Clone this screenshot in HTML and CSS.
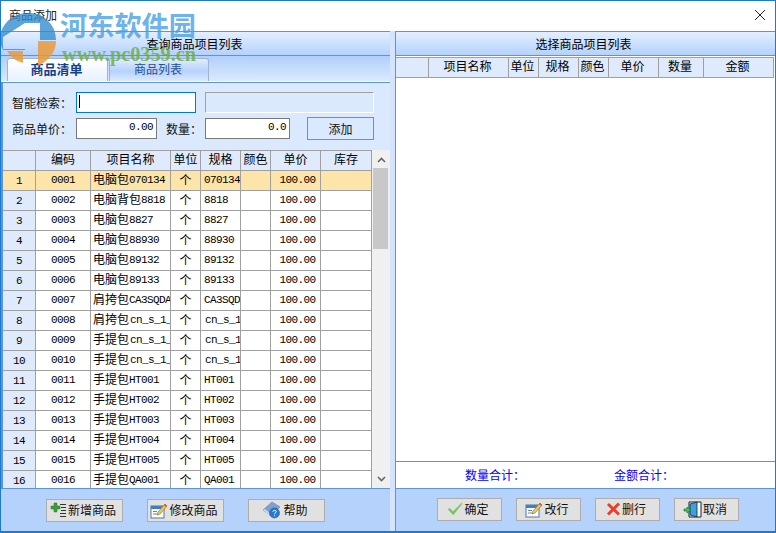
FILE: index.html
```html
<!DOCTYPE html>
<html lang="zh-CN">
<head>
<meta charset="utf-8">
<title>商品添加</title>
<link rel="stylesheet" href="styles.css">
</head>
<body>
<div class="window">
  <div class="titlebar">
    <span class="title">商品添加</span>
    <svg class="close" width="12" height="12" viewBox="0 0 12 12"><path d="M1 1L11 11M11 1L1 11" stroke="#222" stroke-width="1" fill="none"/></svg>
  </div>
  <div class="content">
    <section class="left">
      <div class="bar bar-left">查询商品项目列表</div>
      <div class="tabs">
        <div class="tab active">商品清单</div>
        <div class="tab">商品列表</div>
      </div>
      <div class="form">
        <div class="form-row first">
          <label class="lab w64">智能检索：</label>
          <div class="field focus"><i class="caret"></i></div>
          <div class="field disabled"></div>
        </div>
        <div class="form-row">
          <label class="lab w64">商品单价：</label>
          <div class="field price lat">0.00</div>
          <label class="lab w39">数量：</label>
          <div class="field qty lat">0.0</div>
          <button class="add">添加</button>
        </div>
      </div>
      <div class="grid">
        <div class="grid-table">
          <table class="tbl">
            <colgroup><col class="c1"><col class="c2"><col class="c3"><col class="c4"><col class="c5"><col class="c6"><col class="c7"><col class="c8"></colgroup>
            <thead><tr><th></th><th>编码</th><th>项目名称</th><th>单位</th><th>规格</th><th>颜色</th><th>单价</th><th>库存</th></tr></thead>
            <tbody>
              <tr class="sel"><th><span class="lat">1</span></th><td class="ctr lat">0001</td><td class="nm">电脑包<span class="lat">070134</span></td><td class="ctr">个</td><td class="sp lat">070134</td><td></td><td class="pr lat">100.00</td><td></td></tr>
              <tr><th><span class="lat">2</span></th><td class="ctr lat">0002</td><td class="nm">电脑背包<span class="lat">8818</span></td><td class="ctr">个</td><td class="sp lat">8818</td><td></td><td class="pr lat">100.00</td><td></td></tr>
              <tr><th><span class="lat">3</span></th><td class="ctr lat">0003</td><td class="nm">电脑包<span class="lat">8827</span></td><td class="ctr">个</td><td class="sp lat">8827</td><td></td><td class="pr lat">100.00</td><td></td></tr>
              <tr><th><span class="lat">4</span></th><td class="ctr lat">0004</td><td class="nm">电脑包<span class="lat">88930</span></td><td class="ctr">个</td><td class="sp lat">88930</td><td></td><td class="pr lat">100.00</td><td></td></tr>
              <tr><th><span class="lat">5</span></th><td class="ctr lat">0005</td><td class="nm">电脑包<span class="lat">89132</span></td><td class="ctr">个</td><td class="sp lat">89132</td><td></td><td class="pr lat">100.00</td><td></td></tr>
              <tr><th><span class="lat">6</span></th><td class="ctr lat">0006</td><td class="nm">电脑包<span class="lat">89133</span></td><td class="ctr">个</td><td class="sp lat">89133</td><td></td><td class="pr lat">100.00</td><td></td></tr>
              <tr><th><span class="lat">7</span></th><td class="ctr lat">0007</td><td class="nm">肩挎包<span class="lat">CA3SQDA</span></td><td class="ctr">个</td><td class="sp lat">CA3SQDA</td><td></td><td class="pr lat">100.00</td><td></td></tr>
              <tr><th><span class="lat">8</span></th><td class="ctr lat">0008</td><td class="nm">肩挎包<span class="lat in">cn_s_1_</span></td><td class="ctr">个</td><td class="sp lat"><span class="in">cn_s_1</span></td><td></td><td class="pr lat">100.00</td><td></td></tr>
              <tr><th><span class="lat">9</span></th><td class="ctr lat">0009</td><td class="nm">手提包<span class="lat in">cn_s_1_</span></td><td class="ctr">个</td><td class="sp lat"><span class="in">cn_s_1</span></td><td></td><td class="pr lat">100.00</td><td></td></tr>
              <tr><th><span class="lat">10</span></th><td class="ctr lat">0010</td><td class="nm">手提包<span class="lat in">cn_s_1_</span></td><td class="ctr">个</td><td class="sp lat"><span class="in">cn_s_1</span></td><td></td><td class="pr lat">100.00</td><td></td></tr>
              <tr><th><span class="lat">11</span></th><td class="ctr lat">0011</td><td class="nm">手提包<span class="lat">HT001</span></td><td class="ctr">个</td><td class="sp lat">HT001</td><td></td><td class="pr lat">100.00</td><td></td></tr>
              <tr><th><span class="lat">12</span></th><td class="ctr lat">0012</td><td class="nm">手提包<span class="lat">HT002</span></td><td class="ctr">个</td><td class="sp lat">HT002</td><td></td><td class="pr lat">100.00</td><td></td></tr>
              <tr><th><span class="lat">13</span></th><td class="ctr lat">0013</td><td class="nm">手提包<span class="lat">HT003</span></td><td class="ctr">个</td><td class="sp lat">HT003</td><td></td><td class="pr lat">100.00</td><td></td></tr>
              <tr><th><span class="lat">14</span></th><td class="ctr lat">0014</td><td class="nm">手提包<span class="lat">HT004</span></td><td class="ctr">个</td><td class="sp lat">HT004</td><td></td><td class="pr lat">100.00</td><td></td></tr>
              <tr><th><span class="lat">15</span></th><td class="ctr lat">0015</td><td class="nm">手提包<span class="lat">HT005</span></td><td class="ctr">个</td><td class="sp lat">HT005</td><td></td><td class="pr lat">100.00</td><td></td></tr>
              <tr><th><span class="lat">16</span></th><td class="ctr lat">0016</td><td class="nm">手提包<span class="lat">QA001</span></td><td class="ctr">个</td><td class="sp lat">QA001</td><td></td><td class="pr lat">100.00</td><td></td></tr>
            </tbody>
          </table>
        </div>
        <div class="scrollbar">
          <svg class="arrow" width="9" height="6" viewBox="0 0 9 6"><path d="M1 5L4.500 1.500L8 5" stroke="#666" stroke-width="1.600" fill="none"/></svg>
          <div class="track"><div class="thumb"></div></div>
          <svg class="arrow" width="9" height="6" viewBox="0 0 9 6"><path d="M1 1L4.500 4.500L8 1" stroke="#666" stroke-width="1.600" fill="none"/></svg>
        </div>
      </div>
      <div class="footer foot-left">
        <button class="btn wide">
          <svg width="17" height="17" viewBox="0 0 17 17"><path d="M4 1h3v3h3v3H7v3H4V7H1V4h3z" fill="#3f9a3c" stroke="#2c7a2c" stroke-width=".5"/><path d="M10 2.500h6M11 5.500h5M11 8.500h5M10 11.500h6M10 14.500h6" stroke="#333" stroke-width="1"/></svg>
          <span>新增商品</span>
        </button>
        <button class="btn wide">
          <svg width="18" height="17" viewBox="0 0 18 17"><rect x="1" y="4" width="13" height="12" fill="#fff" stroke="#4a78b0"/><rect x="1" y="4" width="13" height="3" fill="#3f7fc4"/><path d="M3 9.500h4M3 12h4" stroke="#5a86bc"/><path d="M7 13l1-3 7-8 2 2-7 8z" fill="#f3c65a" stroke="#a5752a" stroke-width=".7"/><path d="M14.500 2.500l2 2" stroke="#d05030" stroke-width="1.500"/></svg>
          <span>修改商品</span>
        </button>
        <button class="btn wide">
          <svg width="20" height="18" viewBox="0 0 20 18"><path d="M1 9L10 1l8 5-3 3-6 6z" fill="#7d9fd2" stroke="#6a8abb" stroke-width=".7"/><path d="M1 9l7 6 1-2-6-5z" fill="#c9d6ec"/><circle cx="12.500" cy="12" r="5" fill="#2878c8" stroke="#1c5ea4" stroke-width=".6"/><path d="M10.800 10.700c.3-1.700 3.500-1.700 3.500 0 0 1.200-1.800 1.200-1.800 2.500M12.500 14.200v1" stroke="#fff" stroke-width="1" fill="none"/></svg>
          <span>帮助</span>
        </button>
      </div>
    </section>
    <div class="divider"></div>
    <section class="right">
      <div class="bar bar-right">选择商品项目列表</div>
      <div class="right-table">
        <table class="tbl">
          <colgroup><col class="r1"><col class="r2"><col class="r3"><col class="r4"><col class="r5"><col class="r6"><col class="r7"><col class="r8"></colgroup>
          <thead><tr><th></th><th>项目名称</th><th>单位</th><th>规格</th><th>颜色</th><th>单价</th><th>数量</th><th>金额</th></tr></thead>
        </table>
      </div>
      <div class="summary">
        <span class="sum-a">数量合计：</span>
        <span class="sum-b">金额合计：</span>
      </div>
      <div class="footer foot-right">
        <button class="btn">
          <svg width="16" height="14" viewBox="0 0 16 14"><path d="M1 7.500l1.500-1.500 3.500 3.500L14.500 1l.8.7L6.300 13z" fill="#74c455" stroke="#9ccf8c" stroke-width=".5"/></svg>
          <span>确定</span>
        </button>
        <button class="btn">
          <svg width="18" height="17" viewBox="0 0 18 17"><rect x="1" y="4" width="13" height="12" fill="#fff" stroke="#4a78b0"/><rect x="1" y="4" width="13" height="3" fill="#3f7fc4"/><path d="M3 9.500h4M3 12h4" stroke="#5a86bc"/><path d="M7 13l1-3 7-8 2 2-7 8z" fill="#f3c65a" stroke="#a5752a" stroke-width=".7"/><path d="M14.500 2.500l2 2" stroke="#d05030" stroke-width="1.500"/></svg>
          <span>改行</span>
        </button>
        <button class="btn">
          <svg width="15" height="14" viewBox="0 0 15 14"><path d="M2 2l11 10.500M13 1.500L2 12.500" stroke="#e8402a" stroke-width="3" fill="none"/></svg>
          <span>删行</span>
        </button>
        <button class="btn">
          <svg width="19" height="17" viewBox="0 0 19 17"><path d="M6 1h12v15H6z" fill="#fff" stroke="#123"/><path d="M7 3l7-2v15l-7-2z" fill="#3fa0de" stroke="#123" stroke-width=".8"/><path d="M1 8h3V6l3.500 3L4 12v-2H1z" fill="#3fd03a" stroke="#1a7a1a" stroke-width=".7"/></svg>
          <span>取消</span>
        </button>
      </div>
    </section>
  </div>
  <div class="watermark">
    <svg class="wm-logo" width="58" height="52" viewBox="0 0 58 52">
      <path d="M0 27C0 10 14 0 28 0S56 10 56 27H40V10H25L3 24V36H25V37H3C1 33 0 30 0 27z" fill="#2f8ad0" opacity=".78"/>
      <path d="M38 28H56C56 38 50 46 40 52H38z" fill="#ea9a3a" opacity=".85"/>
      <path d="M7 38H23V50C15 48 10 43 7 38z" fill="#ea9a3a" opacity=".85"/>
    </svg>
    <span class="wm-cn">河东软件园</span>
    <span class="wm-en">www.pc0359.cn</span>
  </div>
</div>
</body>
</html>
```

FILE: styles.css
```css
* { box-sizing: border-box; }
html, body { margin: 0; padding: 0; }
body {
  width: 776px;
  height: 533px;
  overflow: hidden;
  font: 12px/1 "Noto Sans CJK SC", "Liberation Sans", sans-serif;
  color: #000;
  background: #fff;
}
.window {
  position: relative;
  width: 776px;
  height: 533px;
  display: flex;
  flex-direction: column;
  border: 1px solid #1b7bd0;
  border-bottom-width: 2px;
  overflow: hidden;
}
.titlebar {
  flex: 0 0 30px;
  display: flex;
  align-items: center;
  justify-content: space-between;
  padding: 0 9px 2px 8px;
  background: #fff;
}
.title { font-size: 12px; color: #222; }
.content { flex: 1; display: flex; min-height: 0; background: #b4d2fc; }
.left, .right { display: flex; flex-direction: column; }
.left { width: 389px; }
.right { flex: 1; border-left: 1px solid #5e94d4; }
.divider { width: 5px; background: #d3e4fc; }
.bar {
  flex: 0 0 25px;
  display: flex;
  align-items: center;
  justify-content: center;
  border-top: 1px solid #5e94d4;
  border-bottom: 1px solid #5e94d4;
  background: linear-gradient(#e4effe, #b4d2fc);
  font-size: 12px;
}
.bar-left { padding-right: 2px; }
.bar-right { padding-right: 4px; }
.tabs {
  flex: 0 0 26px;
  display: flex;
  align-items: flex-end;
  gap: 1px;
  padding: 2px 0 0 6px;
  background: linear-gradient(#b0cffb, #dbe9fe);
  border-bottom: 1px solid #fff;
}
.tab {
  width: 100px;
  height: 23px;
  display: flex;
  align-items: center;
  justify-content: center;
  padding: 0 2px 3px 0;
  border: 1px solid #9fb4d0;
  border-bottom: 0;
  border-radius: 3px 3px 0 0;
  background: linear-gradient(#e0ecfe, #b5d2fb 55%, #dbe9fe);
  color: #1d4f9d;
  font-size: 12px;
}
.tab.active {
  width: 101px;
  background: linear-gradient(#fff, #e8f1fe);
  color: #14408a;
  font-weight: 700;
  font-size: 13px;
}
.form {
  flex: 0 0 68px;
  padding: 9px 0 0 9px;
  background: #dbe9fe;
  border: 1px solid #5e94d4;
  border-width: 1px 0 0 2px;
}
.form-row { display: flex; align-items: center; height: 23px; }
.form-row.first { margin-bottom: 4px; height: 21px; }
.lab { font-size: 12px; color: #111; padding-top: 1px; }
.w64 { width: 64px; }
.w39 { width: 39px; margin-left: 9px; }
.field {
  position: relative;
  height: 21px;
  background: #fff;
  border: 1px solid #7a7a7a;
  text-align: right;
  padding: 3px 3px 0 0;
}
.field.focus { width: 120px; border-color: #0078d7; }
.field.disabled {
  width: 169px;
  margin-left: 9px;
  background: #dbe9fe;
  border-color: #a0a0a0 #fff #fff #a0a0a0;
}
.field.price { width: 81px; }
.field.qty { width: 85px; }
.caret {
  position: absolute;
  left: 2px;
  top: 2px;
  width: 1px;
  height: 13px;
  background: #000;
}
.add {
  width: 67px;
  height: 23px;
  margin-left: 17px;
  padding: 0;
  background: #dbe9fe;
  border: 1px solid #5e94d4;
  font: inherit;
  color: #111;
}
.lat {
  font-family: "Liberation Mono", monospace;
  font-size: 11px;
  letter-spacing: -.6px;
  white-space: pre;
}
.grid {
  flex: 0 0 338px;
  display: flex;
  overflow: hidden;
  background: #fff;
  border-left: 2px solid #5e94d4;
}
.grid-table { flex: 0 0 369px; overflow: hidden; }
.tbl {
  table-layout: fixed;
  border-collapse: separate;
  border-spacing: 0;
  width: 100%;
  font-size: 12px;
}
.tbl th, .tbl td {
  height: 20px;
  padding: 0 0 2px;
  border-right: 1px solid #a0a0a0;
  border-bottom: 1px solid #a0a0a0;
  overflow: hidden;
  white-space: nowrap;
  text-align: center;
  font-weight: 400;
  vertical-align: middle;
}
.tbl thead th { background: #dfebfd; border-top: 1px solid #a0a0a0; height: 21px; padding-bottom: 3px; }
.tbl tbody th { background: #dfebfd; padding-bottom: 1px; }
.tbl .ctr { text-align: center; }
.tbl td.lat { padding-bottom: 1px; }
.tbl .nm { text-align: left; padding-left: 2px; }
.tbl .nm .lat { position: relative; top: -1px; }
.tbl .sp { text-align: left; padding-left: 3px; }
.tbl .pr { text-align: center; padding-left: 4px; }
.in { margin-left: 1px; }
.sel th, .sel td { background: #fde4a8 !important; }
.c1 { width: 33px; }
.c2 { width: 55px; }
.c3 { width: 80px; }
.c4 { width: 30px; }
.c5 { width: 40px; }
.c6 { width: 30px; }
.c7 { width: 50px; }
.c8 { width: 51px; }
.scrollbar {
  flex: 1;
  display: flex;
  flex-direction: column;
  align-items: center;
  background: #f0f0f0;
  padding: 7px 0 6px;
}
.arrow { flex: none; }
.track { flex: 1; width: 100%; margin-top: 5px; }
.thumb { width: 15px; height: 81px; margin-left: 1px; background: #c8c8c8; }
.footer {
  flex: 0 0 43px;
  display: flex;
  background: #b4d2fc;
  border-top: 1px solid #5e94d4;
  padding-top: 10px;
}
.foot-left { gap: 24px; padding-left: 45px; }
.foot-right { gap: 14px; padding-left: 41px; padding-top: 9px; }
.btn {
  width: 65px;
  height: 23px;
  display: flex;
  align-items: center;
  justify-content: center;
  gap: 1px;
  padding: 0 3px 1px 0;
  background: #e1e1e1;
  border: 1px solid #adadad;
  font: inherit;
  color: #111;
}
.btn.wide { width: 77px; }
.right-table { flex: 1; background: #fff; padding-top: 1px; }
.right-table th { padding-right: 2px; }
.r1 { width: 33px; }
.r2 { width: 80px; }
.r3 { width: 30px; }
.r4 { width: 40px; }
.r5 { width: 30px; }
.r6 { width: 50px; }
.r7 { width: 45px; }
.r8 { width: 70px; }
.right-table .tbl { width: 378px; }
.summary {
  flex: 0 0 27px;
  display: flex;
  align-items: center;
  padding: 0 0 1px 69px;
  background: #fff;
  border-top: 1px solid #5e94d4;
  color: #0000ff;
}
.sum-b { margin-left: 89px; }
.sum-a, .sum-b { width: 60px; white-space: nowrap; }
.watermark {
  position: absolute;
  left: -1px;
  top: 8px;
  width: 200px;
  height: 54px;
  pointer-events: none;
}
.wm-logo { position: absolute; left: 0; top: 4px; }
.wm-cn {
  position: absolute;
  left: 60px;
  top: 0;
  font-size: 27.200px;
  line-height: 30px;
  font-weight: 700;
  color: rgba(70, 160, 230, .8);
  white-space: nowrap;
}
.wm-en {
  position: absolute;
  left: 62px;
  top: 35px;
  font: 700 20.300px/20px "Liberation Serif", serif;
  color: rgba(110, 175, 70, .85);
  white-space: nowrap;
}
```
